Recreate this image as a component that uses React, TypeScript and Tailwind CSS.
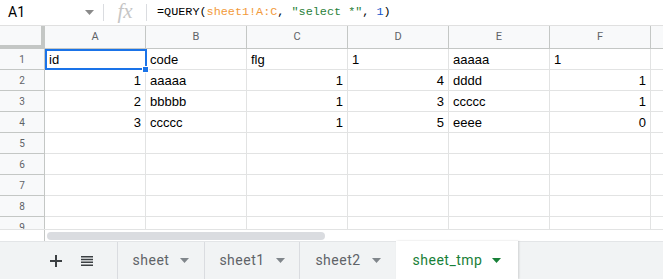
const cols = ['A', 'B', 'C', 'D', 'E', 'F']

type Cell = { v: string; num?: boolean }

const rows: Cell[][] = [
  [{ v: 'id' }, { v: 'code' }, { v: 'flg' }, { v: '1' }, { v: 'aaaaa' }, { v: '1' }],
  [{ v: '1', num: true }, { v: 'aaaaa' }, { v: '1', num: true }, { v: '4', num: true }, { v: 'dddd' }, { v: '1', num: true }],
  [{ v: '2', num: true }, { v: 'bbbbb' }, { v: '1', num: true }, { v: '3', num: true }, { v: 'ccccc' }, { v: '1', num: true }],
  [{ v: '3', num: true }, { v: 'ccccc' }, { v: '1', num: true }, { v: '5', num: true }, { v: 'eeee' }, { v: '0', num: true }],
  [], [], [], [], [],
]

const tabs = [
  { name: 'sheet', w: 'w-[87px] border-r' },
  { name: 'sheet1', w: 'w-[95px] border-r' },
  { name: 'sheet2', w: 'w-[96px]' },
]

function Caret({ color }: { color: string }) {
  return (
    <svg width="9" height="5" viewBox="0 0 9 5">
      <path d="M0 0h9L4.5 5z" fill={color} />
    </svg>
  )
}

export default function App() {
  return (
    <div className="w-[663px] h-[279px] overflow-hidden bg-white flex flex-col" style={{ fontFamily: 'Roboto, "Liberation Sans", sans-serif' }}>
      {/* Formula bar */}
      <div className="h-[26px] shrink-0 flex items-center border-b border-[#e0e0e0]">
        <div className="w-[103px] flex items-center pl-2 pr-[9px] text-[14px] text-black">
          <span className="flex-1">A1</span>
          <Caret color="#8a8a8a" />
        </div>
        <div className="w-px h-[17px] bg-[#dadce0]" />
        <div
          className="w-[42px] text-center text-[21px] italic text-[#c6c6c6] leading-none -mt-[3px]"
          style={{ fontFamily: '"Liberation Serif", serif' }}
        >
          fx
        </div>
        <div className="w-px h-[17px] bg-[#dadce0]" />
        <div className="pl-[10px] text-[11.8px] text-black whitespace-pre" style={{ fontFamily: '"Liberation Mono", monospace' }}>
          =QUERY(<span className="text-[#f29a3a]">sheet1!A:C</span>, <span className="text-[#2a7f3a]">"select *"</span>, <span className="text-[#1155cc]">1</span>)
        </div>
      </div>

      {/* Grid */}
      <div className="relative h-[203px] shrink-0 overflow-hidden">
        <div className="grid grid-cols-[45px_repeat(6,101px)_1fr]">
          {/* header row */}
          <div className="h-[23px] bg-[#f8f9fa] border-r-4 border-b-4 border-[#c4c7c5]" />
          {cols.map((c) => (
            <div key={c} className="h-[23px] bg-[#f8f9fa] border-r border-b border-[#c4c7c5] flex items-center justify-center text-[11px] text-[#5f6368]">
              {c}
            </div>
          ))}
          <div className="h-[23px] bg-[#f8f9fa] border-b border-[#c4c7c5]" />

          {rows.map((r, i) => (
            <div key={i} className="contents">
              <div className="h-[21px] bg-[#f8f9fa] border-r border-b border-[#c4c7c5] flex items-center justify-center text-[10px] text-[#5f6368]">
                {i + 1}
              </div>
              {cols.map((c, j) => {
                const cell = r[j]
                return (
                  <div
                    key={c}
                    className={
                      'h-[21px] border-r border-b border-[#e2e3e3] flex items-center px-[4px] pt-[2px] text-[13px] text-black ' +
                      (cell?.num ? 'justify-end' : 'justify-start')
                    }
                    style={{ fontFamily: '"Liberation Sans", Arial, sans-serif' }}
                  >
                    {cell?.v}
                  </div>
                )
              })}
              <div className="h-[21px] border-b border-[#e2e3e3]" />
            </div>
          ))}
        </div>

        {/* selected cell A1 */}
        <div className="absolute left-[45px] top-[23px] w-[102px] h-[21px] border-2 border-[#1a73e8]" />
        <div className="absolute left-[142px] top-[40px] w-[7px] h-[7px] bg-[#1a73e8] border border-white" />
      </div>

      {/* Horizontal scroll */}
      <div className="h-[12px] shrink-0 flex border-t border-[#e2e3e3]">
        <div className="w-[45px] border-r border-[#c4c7c5]" />
        <div className="pl-[2px] pt-[2px]">
          <div className="w-[278px] h-[8px] rounded-full bg-[#dadce0]" />
        </div>
      </div>

      {/* Sheet tabs */}
      <div className="flex-1 flex bg-[#f1f3f4] border-t border-[#e3e5e7]">
        <div className="w-[118px] border-r border-[#dadce0] flex items-center pl-[50px] gap-[19px]">
          <svg width="12" height="12" viewBox="0 0 12 12">
            <path d="M5 0h2v5h5v2H7v5H5V7H0V5h5z" fill="#3c4043" />
          </svg>
          <svg width="12" height="10" viewBox="0 0 12 10">
            <path d="M0 0h12v1.5H0zM0 2.8h12v1.5H0zM0 5.6h12v1.5H0zM0 8.4h12v1.5H0z" fill="#3c4043" />
          </svg>
        </div>
        {tabs.map((t) => (
          <div key={t.name} className={t.w + ' border-[#dadce0] flex items-center justify-center gap-[11px] text-[14px] tracking-[0.5px] text-[#5f6368]'}>
            <span>{t.name}</span>
            <Caret color="#80868b" />
          </div>
        ))}
        <div className="w-[122px] bg-white shadow-[1px_0_2px_rgba(0,0,0,0.15)] flex items-center justify-center gap-[10px] text-[14px] tracking-[0.5px] text-[#188038] -mt-px">
          <span>sheet_tmp</span>
          <Caret color="#188038" />
        </div>
      </div>
    </div>
  )
}
